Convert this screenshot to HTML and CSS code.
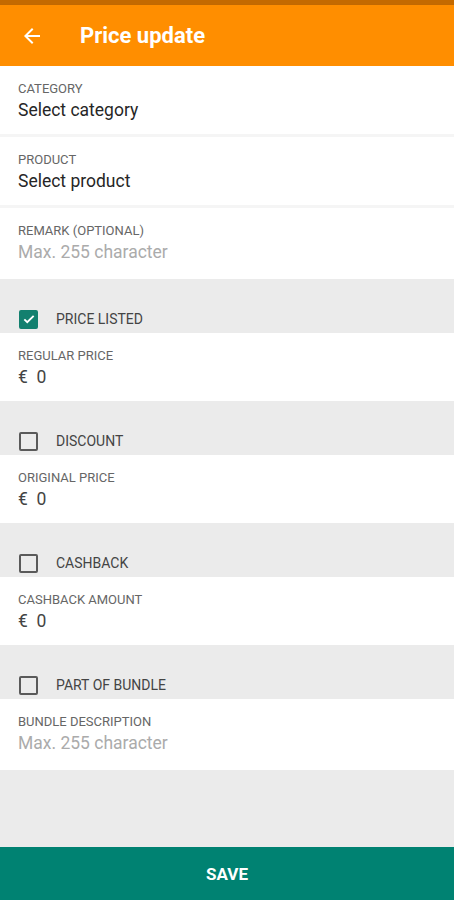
FILE: index.html
```html
<!DOCTYPE html>
<html>
<head>
  <meta charset="UTF-8" />
  <title>Price update</title>
  <meta name="viewport" content="width=device-width, initial-scale=1" />
  <link rel="stylesheet" href="styles.css">
</head>
<body>
  <div class="screen">
    <div class="status-bar"></div>
    <header class="app-bar">
      <button class="back-btn" aria-label="Back">
        <svg width="24" height="24" viewBox="0 0 24 24"><path d="M20 11H7.83l5.59-5.59L12 4l-8 8 8 8 1.41-1.41L7.83 13H20v-2z" fill="#fff"/></svg>
      </button>
      <h1>Price update</h1>
    </header>

    <main class="form">
      <div class="field">
        <label>Category</label>
        <div class="value">Select category</div>
      </div>
      <div class="divider"></div>
      <div class="field">
        <label>Product</label>
        <div class="value">Select product</div>
      </div>
      <div class="divider"></div>
      <div class="field field-tall">
        <label>Remark (optional)</label>
        <div class="value placeholder">Max. 255 character</div>
      </div>

      <div class="check-row">
        <span class="checkbox checked">
          <svg width="14" height="14" viewBox="0 0 24 24"><path d="M4 12.5l5 5L20 6.5" fill="none" stroke="#fff" stroke-width="3.2"/></svg>
        </span>
        <span class="check-label">Price listed</span>
      </div>
      <div class="field">
        <label>Regular price</label>
        <div class="value price">€&nbsp; 0</div>
      </div>

      <div class="check-row">
        <span class="checkbox"></span>
        <span class="check-label">Discount</span>
      </div>
      <div class="field">
        <label>Original price</label>
        <div class="value price">€&nbsp; 0</div>
      </div>

      <div class="check-row">
        <span class="checkbox"></span>
        <span class="check-label">Cashback</span>
      </div>
      <div class="field">
        <label>Cashback amount</label>
        <div class="value price">€&nbsp; 0</div>
      </div>

      <div class="check-row">
        <span class="checkbox"></span>
        <span class="check-label">Part of bundle</span>
      </div>
      <div class="field field-tall">
        <label>Bundle description</label>
        <div class="value placeholder">Max. 255 character</div>
      </div>
    </main>

    <button class="save-btn">Save</button>
  </div>
</body>
</html>
```

FILE: styles.css
```css
body {
  margin: 0;
  font-family: Roboto, "Liberation Sans", sans-serif;
  background-color: #ebebeb;
}
.screen {
  display: flex;
  flex-direction: column;
  min-height: 100vh;
}
.status-bar {
  height: 5px;
  background-color: #c46a00;
}
.app-bar {
  height: 61px;
  background-color: #ff8e00;
  display: flex;
  align-items: center;
  padding-left: 20px;
  box-shadow: 0 1px 2px rgba(0,0,0,0.15);
}
.back-btn {
  background: none;
  border: none;
  padding: 0;
  width: 24px;
  height: 24px;
  display: flex;
  cursor: pointer;
}
.app-bar h1 {
  margin: 0 0 0 36px;
  color: #fff;
  font-size: 22px;
  font-weight: 700;
}
.form {
  flex: 1;
}
.field {
  background: #fff;
  padding: 15px 18px 12px;
}
.field-tall {
  padding-bottom: 15px;
}
.field label {
  display: block;
  font-size: 13px;
  line-height: 16px;
  color: #666;
  text-transform: uppercase;
  margin-bottom: 2px;
}
.value {
  font-size: 17.5px;
  line-height: 23px;
  color: #262626;
}
.price {
  color: #444;
}
.placeholder {
  color: #ababab;
}
.divider {
  height: 3px;
  background-color: #f5f5f5;
}
.check-row {
  display: flex;
  align-items: center;
  height: 20px;
  padding: 30px 0 4px 19px;
}
.checkbox {
  width: 19px;
  height: 19px;
  box-sizing: border-box;
  border: 2px solid #5a5a5a;
  border-radius: 2px;
  display: flex;
  align-items: center;
  justify-content: center;
}
.checkbox.checked {
  background-color: #13806f;
  border-color: #13806f;
}
.check-label {
  margin-left: 18px;
  font-size: 14px;
  color: #444;
  text-transform: uppercase;
}
.save-btn {
  height: 53px;
  border: none;
  background-color: #008272;
  color: #fff;
  font-family: inherit;
  font-size: 17px;
  font-weight: 700;
  text-transform: uppercase;
  cursor: pointer;
}
```
